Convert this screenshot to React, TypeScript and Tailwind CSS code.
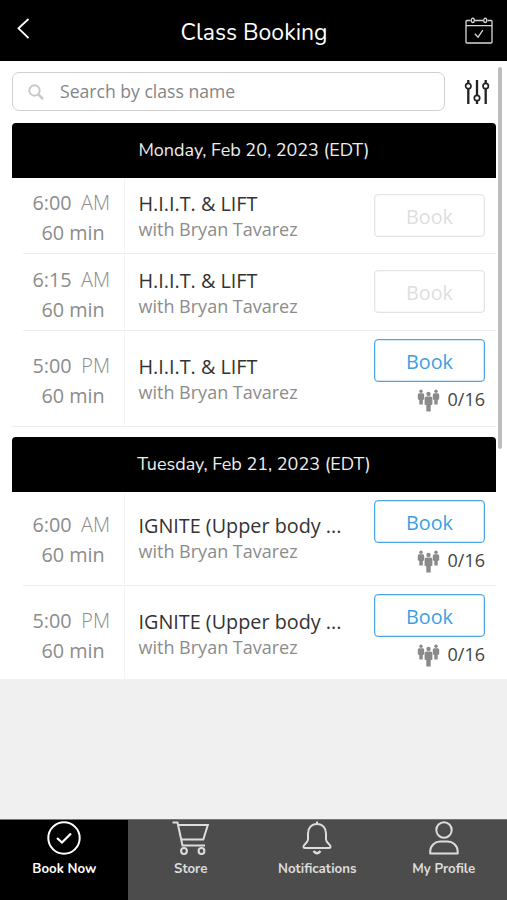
import type { ReactNode } from 'react';
import { clsx } from 'clsx';

interface ClassItem {
    id: string;
    time: string;
    period: 'AM' | 'PM';
    name: string;
    spots?: string;
    // row height and inner offsets
    row: string;
    timeOffset: string;
    nameOffset: string;
}

interface Day {
    date: string;
    classes: ClassItem[];
}

const days: Day[] = [
    {
        date: 'Monday, Feb 20, 2023 (EDT)',
        classes: [
            { id: 'm1', time: '6:00', period: 'AM', name: 'H.I.I.T. & LIFT', row: 'h-[76px]', timeOffset: 'pt-[10px]', nameOffset: 'pt-3' },
            { id: 'm2', time: '6:15', period: 'AM', name: 'H.I.I.T. & LIFT', row: 'h-[77px]', timeOffset: 'pt-[11px]', nameOffset: 'pt-[13px]' },
            { id: 'm3', time: '5:00', period: 'PM', name: 'H.I.I.T. & LIFT', spots: '0/16', row: 'h-[96px]', timeOffset: 'pt-5', nameOffset: 'pt-[22px]' },
        ],
    },
    {
        date: 'Tuesday, Feb 21, 2023 (EDT)',
        classes: [
            { id: 't1', time: '6:00', period: 'AM', name: 'IGNITE (Upper body ...', spots: '0/16', row: 'h-[94px]', timeOffset: 'pt-[18px]', nameOffset: 'pt-5' },
            { id: 't2', time: '5:00', period: 'PM', name: 'IGNITE (Upper body ...', spots: '0/16', row: 'h-[94px]', timeOffset: 'pt-5', nameOffset: 'pt-[22px]' },
        ],
    },
];

function PeopleIcon() {
    return (
        <svg className="mt-[2px]" width="23" height="23" viewBox="0 0 23 23" fill="#8a8a8a">
            <circle cx="4" cy="2.2" r="1.7" />
            <path d="M2.300 4.200h3.400q1.500 0 1.500 1.500v4.500L5.800 11v4.500H2.300V11L.8 10.200V5.700q0-1.500 1.500-1.500z" />
            <circle cx="19" cy="2.2" r="1.7" />
            <path d="M17.300 4.200h3.400q1.500 0 1.500 1.500v4.500l-1.500.8v4.500h-3.400V11l-1.500-.8V5.700q0-1.500 1.500-1.500z" />
            <circle cx="11.500" cy="4.900" r="2.200" />
            <path d="M9.500 7.500h4q1.900 0 1.900 1.900v6l-1.700.9v6.200H9.300v-6.200l-1.700-.9v-6q0-1.900 1.900-1.900z" />
        </svg>
    );
}

function CalendarIcon() {
    return (
        <svg width="28" height="28" viewBox="0 0 28 28" fill="none" stroke="#d8d8d8" strokeWidth="1.300">
            <path d="M5.500 3.500H2Q1 3.500 1 4.500V25Q1 26 2 26H26Q27 26 27 25V4.500Q27 3.500 26 3.500H22.500M10 3.500h8M1 8.700h26" />
            <ellipse cx="7.800" cy="3.300" rx="1.500" ry="2.200" />
            <ellipse cx="20.200" cy="3.300" rx="1.500" ry="2.200" />
            <path d="M9.800 16.700l3.300 3.500 4.700-7" />
        </svg>
    );
}

function FilterIcon() {
    return (
        <svg width="26" height="26" viewBox="0 0 26 26" fill="none" stroke="#222" strokeWidth="1.700">
            <path d="M4.300 1v3M4.300 9.500V25M13 1v15.500M13 22v3M21.700 1v3M21.700 9.500V25" strokeWidth="2.300" />
            <circle cx="4.300" cy="7" r="2.700" />
            <circle cx="13" cy="19" r="2.700" />
            <circle cx="21.700" cy="7" r="2.700" />
        </svg>
    );
}

function ClassRow({ item, lastOfDay, lastDay }: { item: ClassItem; lastOfDay: boolean; lastDay: boolean }) {
    const open = Boolean(item.spots);
    const line = !(lastOfDay && lastDay) && 'border-b border-[#eaeeee]';

    return (
        <div className={clsx('flex', item.row)}>
            <div className={clsx('w-[113px] shrink-0 border-r border-[#f3f5f5]', !lastOfDay && 'pl-[11px]')}>
                <div
                    className={clsx(
                        'h-full text-[19.800px] leading-[30px] text-[#8c8c8c]',
                        lastOfDay && 'pl-[11px]',
                        line,
                        item.timeOffset
                    )}
                >
                    <div className="flex justify-between pl-[9.500px] pr-[14px]">
                        <span>{item.time}</span>
                        <span className="font-light">{item.period}</span>
                    </div>
                    <div className="pl-[18.500px]">60 min</div>
                </div>
            </div>
            <div className={clsx('flex flex-1 justify-between pl-[13.500px] pr-[11px]', line)}>
                <div className={clsx('whitespace-nowrap', item.nameOffset)}>
                    <h3 className="text-[19.800px] leading-[27px] text-[#333]">{item.name}</h3>
                    <p className="text-[18px] leading-[25px] text-[#8c8c8c]">with Bryan Tavarez</p>
                </div>
                <div className={clsx('flex flex-col items-end', open ? 'pt-2' : 'pt-4')}>
                    <button
                        className={clsx(
                            'h-[43px] w-[111px] rounded-[4px] border-[1.500px] pt-[2px] text-[19.800px] leading-none shadow-[inset_0_0_0_0.500px]',
                            open
                                ? 'border-[#4ba6e3] text-[#3d9fe3] shadow-[#4ba6e3]/50'
                                : 'border-[#e3e3e3] text-[#dedede] shadow-[#e3e3e3]/50'
                        )}
                    >
                        Book
                    </button>
                    {open && (
                        <div className="flex items-center gap-2 pt-[3px] text-[18px] leading-[28px] text-[#444]">
                            <PeopleIcon />
                            <span>{item.spots}</span>
                        </div>
                    )}
                </div>
            </div>
        </div>
    );
}

function DaySection({ day, lastDay }: { day: Day; lastDay: boolean }) {
    return (
        <section className="w-[484px]">
            <h2 className="flex h-[55px] items-center justify-center rounded-t-[4px] bg-black font-['Nunito'] text-[18px] text-[#eee]">
                {day.date}
            </h2>
            {day.classes.map((item, i) => (
                <ClassRow key={item.id} item={item} lastOfDay={i === day.classes.length - 1} lastDay={lastDay} />
            ))}
        </section>
    );
}

function NavItem({ label, active, children }: { label: string; active?: boolean; children: ReactNode }) {
    return (
        <div
            className={clsx(
                "flex flex-1 flex-col items-center pt-px font-['Nunito'] text-[13.300px] font-bold leading-[20px]",
                active ? 'bg-black pl-px text-white' : 'bg-[#4c4c4c] text-[#ddd]'
            )}
        >
            <svg width="38" height="36" viewBox="0 0 38 36" fill="none" stroke="currentColor" strokeWidth="2">
                {children}
            </svg>
            <span className="pt-[2px]">{label}</span>
        </div>
    );
}

export default function App() {
    return (
        <div className="flex h-[900px] w-[507px] flex-col overflow-hidden bg-[#f0f0f0] font-['Open_Sans',sans-serif]">
            <header className="flex h-[61px] shrink-0 items-center justify-between bg-black pl-[17px] pr-[14px]">
                <svg className="mb-[5px]" width="13" height="21" viewBox="0 0 13 21" fill="none" stroke="#fff" strokeWidth="1.800">
                    <path d="M11.500 1L1.500 10.300L11.500 20" />
                </svg>
                <h1 className="pl-[13px] pt-[5px] font-['Nunito'] text-[23px] text-white">Class Booking</h1>
                <CalendarIcon />
            </header>

            <main className="relative h-[618px] shrink-0 bg-white pl-3">
                <div className="flex h-[62px] items-center pb-px">
                    <div className="flex h-[39px] w-[433px] items-center gap-4 rounded-[7px] border-[1.500px] border-[#d0d0d0] pl-[15px] text-[17.600px] text-[#858585]">
                        <svg width="16" height="16" viewBox="0 0 16 16" fill="none" stroke="#c8c8c8" strokeWidth="1.900">
                            <circle cx="6.500" cy="6.500" r="5.200" />
                            <path d="M10.300 10.300L15 15" strokeWidth="2.600" />
                        </svg>
                        <span>Search by class name</span>
                    </div>
                    <div className="pl-[19px]">
                        <FilterIcon />
                    </div>
                </div>
                <div className="flex flex-col gap-[10px]">
                    {days.map((day, i) => (
                        <DaySection key={day.date} day={day} lastDay={i === days.length - 1} />
                    ))}
                </div>
                <div className="absolute right-[5px] top-[6px] h-[382px] w-1 rounded-full bg-[#bdbdbd]" />
            </main>

            <nav className="mt-auto flex h-[81px] shrink-0 border-t border-[#777]">
                <NavItem label="Book Now" active>
                    <circle cx="19" cy="17" r="15.700" />
                    <path d="M12 17l5 4.500 9-9" strokeWidth="2.200" />
                </NavItem>
                <NavItem label="Store">
                    <path d="M.5 1.500h5l5 23H33M6.300 4H35.800l-4.500 14.500H9.200" />
                    <circle cx="12" cy="30" r="2.900" />
                    <circle cx="29.500" cy="30" r="2.900" />
                </NavItem>
                <NavItem label="Notifications">
                    <path d="M19 .5v2.500M19 3c-5.500 0-9 4-9 9.500v6c0 3-4.500 5-4.500 7 0 1 .7 1.500 1.500 1.500h24c.8 0 1.500-.5 1.500-1.500 0-2-4.500-4-4.500-7v-6C28 7 24.500 3 19 3z" />
                    <path d="M15.500 30q3.500 4.500 7 0" strokeWidth="2.400" />
                </NavItem>
                <NavItem label="My Profile">
                    <circle cx="19" cy="9" r="7.700" />
                    <path d="M5.200 32.500V30.500c0-6 5-10 10-10h7.500c5 0 10 4 10 10V32.500z" strokeLinejoin="round" />
                </NavItem>
            </nav>
        </div>
    );
}
